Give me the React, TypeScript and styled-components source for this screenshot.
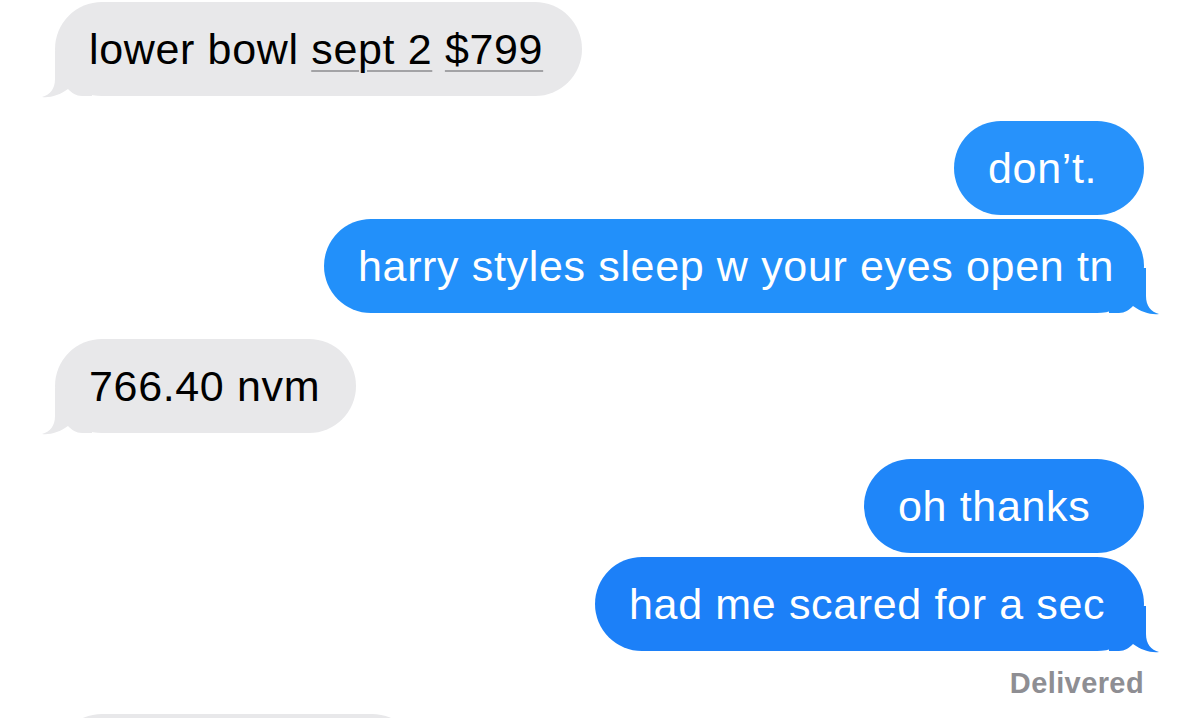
import styled, { createGlobalStyle } from 'styled-components';

const GlobalStyle = createGlobalStyle`
  html, body {
    margin: 0;
    padding: 0;
    background: #ffffff;
  }
  body {
    font-family: 'Liberation Sans', Arial, sans-serif;
    -webkit-font-smoothing: antialiased;
  }
`;

const Thread = styled.div`
  display: flex;
  flex-direction: column;
  width: 1200px;
  height: 718px;
  overflow: hidden;
  box-sizing: border-box;
  padding: 2px 56px 0 55px;
`;

const Bubble = styled.div<{
  $mine?: boolean;
  $width: number;
  $gap: number;
  $color?: string;
}>`
  position: relative;
  align-self: ${(p) => (p.$mine ? 'flex-end' : 'flex-start')};
  width: ${(p) => p.$width}px;
  box-sizing: border-box;
  margin-top: ${(p) => p.$gap}px;
  padding: 21px 0 21px 34px;
  min-height: 94px;
  border-radius: 47px;
  background: ${(p) => p.$color ?? (p.$mine ? '#2290fa' : '#e8e8ea')};
  color: ${(p) => (p.$mine ? '#ffffff' : '#000000')};
  font-size: 43px;
  line-height: 52px;
  letter-spacing: 0.65px;
  white-space: nowrap;
`;

const Label = styled.span`
  position: relative;
  z-index: 1;
`;

const Tail = styled.svg<{ $mine?: boolean }>`
  position: absolute;
  z-index: 0;
  bottom: -2px;
  width: 50px;
  height: 47px;
  ${(p) =>
    p.$mine
      ? 'right: -15px; transform: scaleX(-1);'
      : 'left: -13px;'}
`;

const DataLink = styled.span`
  text-decoration: underline;
  text-decoration-color: #a3a3a6;
  text-decoration-thickness: 2px;
  text-underline-offset: 6px;
`;

const Receipt = styled.div`
  align-self: flex-end;
  margin-top: 15px;
  font-size: 29px;
  line-height: 34px;
  font-weight: 700;
  letter-spacing: 0.4px;
  color: #8e8e93;
`;

const BubbleTail = ({ mine, color }: { mine?: boolean; color: string }) => (
  <Tail $mine={mine} viewBox="0 0 50 47">
    <path
      d="M13 0 L13 28 C13 38 8 44 0 46 C8 47 18 44 26 38 C30 42 34 45 40 45 L50 45 L50 0 Z"
      fill={color}
    />
  </Tail>
);

const GRAY = '#e8e8ea';

export default function App() {
  return (
    <>
      <GlobalStyle />
      <Thread>
        <Bubble $width={527} $gap={0}>
          <Label>
            lower bowl <DataLink>sept 2</DataLink> <DataLink>$799</DataLink>
          </Label>
          <BubbleTail color={GRAY} />
        </Bubble>

        <Bubble $mine $width={190} $gap={25} $color="#2792fb">
          <Label>don’t.</Label>
        </Bubble>
        <Bubble $mine $width={820} $gap={4} $color="#2290fa">
          <Label>harry styles sleep w your eyes open tn</Label>
          <BubbleTail mine color="#2290fa" />
        </Bubble>

        <Bubble $width={301} $gap={26}>
          <Label>766.40 nvm</Label>
          <BubbleTail color={GRAY} />
        </Bubble>

        <Bubble $mine $width={280} $gap={26} $color="#1f86f9">
          <Label>oh thanks</Label>
        </Bubble>
        <Bubble $mine $width={549} $gap={4} $color="#1c80f8">
          <Label>had me scared for a sec</Label>
          <BubbleTail mine color="#1c80f8" />
        </Bubble>

        <Receipt>Delivered</Receipt>

        <Bubble $width={364} $gap={14} />
      </Thread>
    </>
  );
}
